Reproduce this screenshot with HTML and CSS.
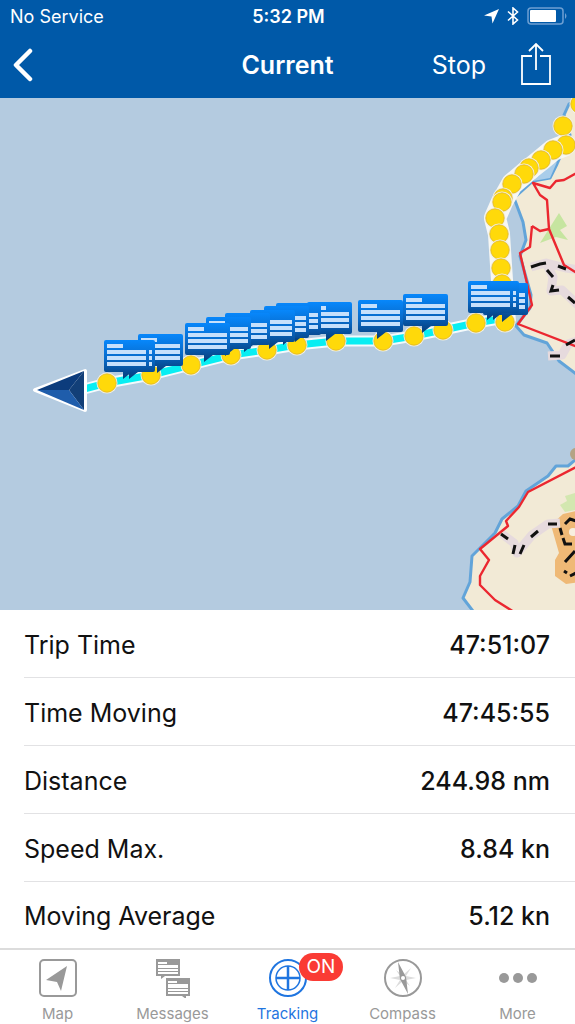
FILE: index.html
```html
<!DOCTYPE html>
<html lang="en">
<head>
    <meta charset="UTF-8">
    <meta name="viewport" content="width=device-width, initial-scale=1.0">
    <title>Tracking</title>
    <link rel="stylesheet" href="styles.css">
</head>
<body>
    <header class="header">
        <div class="status-bar">
            <span>No Service</span>
            <span class="clock">5:32 PM</span>
            <div class="status-icons">
                <svg width="15" height="15" viewBox="0 0 15 15"><path d="M15 0 8.500 14.500 7.500 7.500 0 6.500z" fill="#fff"/></svg>
                <svg width="12" height="18" viewBox="0 0 12 18"><path d="M1 4.500 10.500 13 6 17V1l4.500 4L1 13.500" fill="none" stroke="#fff" stroke-width="1.600"/></svg>
                <svg width="40" height="18" viewBox="0 0 40 18">
                    <rect x="1" y="1" width="35" height="16" rx="3" fill="none" stroke="#6d9fd2" stroke-width="1.500"/>
                    <rect x="3" y="3" width="26" height="12" rx="1" fill="#fff"/>
                    <path d="M38 6q3 3 0 6z" fill="#6d9fd2"/>
                </svg>
            </div>
        </div>
        <nav class="nav-bar">
            <button type="button" class="back" aria-label="Back">
                <svg width="20" height="34" viewBox="0 0 20 34"><path d="M17 3 3 17l14 14" fill="none" stroke="#fff" stroke-width="4.500" stroke-linecap="round" stroke-linejoin="round"/></svg>
            </button>
            <h1>Current</h1>
            <div class="nav-actions">
                <button type="button" class="stop">Stop</button>
                <button type="button" aria-label="Share">
                    <svg width="32" height="44" viewBox="0 0 32 44" fill="none" stroke="#fff" stroke-width="1.800"><path d="M12 13H2v28h28V13H20M16 27V1M9 8l7-7 7 7"/></svg>
                </button>
            </div>
        </nav>
    </header>

    <svg class="map" viewBox="0 98 575 512" preserveAspectRatio="xMidYMid slice" role="img" aria-label="Track map">
        <defs>
            <linearGradient id="bubble" x1="0" y1="0" x2="0" y2="1">
                <stop offset="0" stop-color="#0787fb"/>
                <stop offset="0.500" stop-color="#0869c7"/>
                <stop offset="1" stop-color="#063c78"/>
            </linearGradient>
            <g id="msg">
                <path d="M2 0H43Q45 0 45 2V30Q45 32 43 32H28L19 39V32H2Q0 32 0 30V2Q0 0 2 0z" fill="url(#bubble)"/>
                <path d="M3 4h16v4H3zM3 10h39v4H3zM3 16h39v4H3zM3 22h39v4H3z" fill="#c6e0fc"/>
            </g>
            <g id="dot">
                <circle r="10.500" fill="#f2f0e2"/>
                <circle r="9.200" fill="#ffd90a" stroke="#e0b52a" stroke-width="0.800"/>
            </g>
        </defs>

        <rect y="98" width="575" height="512" fill="#b4cbe0"/>

        <!-- land -->
        <g fill="#f2ead6" stroke="#62a4d9" stroke-width="3" stroke-linejoin="round">
            <path d="M580 98 569 104 564 115 570 135 557 164 550 178 533 181 514 198 523 222 526 240 520 256 531 295 530 308 516 326 524 335 547 343 559 361 580 377z"/>
            <path d="M580 456 568 466 556 466 548 476 526 491 518 506 502 519 495 533 472 556 470 582 463 598 476 615H580z"/>
        </g>
        <path d="M533 181 550 178 557 162 542 172z" fill="#a9cdea"/>
        <g fill="#c6e5a0">
            <path d="M540 243 559 213 567 226 560 230 568 240 556 237z"/>
            <path d="M560 505l7-4-2-5 10-3v17l-10 2z" opacity="0.700"/>
        </g>
        <path d="M580 510 563 514 551 525 559 553 555 560 555 576 566 584 580 582z" fill="#efb976"/>
        <circle cx="573" cy="532" r="4" fill="#f8efe0"/>
        <circle cx="576" cy="454" r="6" fill="#b5a384"/>

        <!-- roads -->
        <g fill="none" stroke="#e6dadd" stroke-width="9" stroke-linejoin="round">
            <path d="M531 267 546 263 553 277 551 291 562 290 580 307M546 263 566 268 580 270M548 356 562 355 568 344 580 340"/>
            <path d="M502 534 514 543 517 553 532 535 548 524 560 523"/>
        </g>
        <g fill="none" stroke="#eb2730" stroke-width="2.400" stroke-linejoin="round">
            <path d="M580 171 564 180 556 181 550 188 533 183 540 195 547 200 549 229 564 265 580 275"/>
            <path d="M532 226 530 247 520 253 532 305 518 324 580 348M532 226 540 231 549 229"/>
            <path d="M580 465 528 492 519 507 506 521 508 526 480 549 489 560 480 576V585L495 600 514 612"/>
        </g>
        <g fill="none" stroke="#111" stroke-width="3">
            <path d="M531 267 540 264 546 263M547 270 553 277M558 266 566 269M553 285 551 291 559 290M568 297 575 303M550 356H560M566 345 575 340"/>
            <path d="M501 534 508 539M515 545 513 554M524 545 520 554M531 537 538 531M548 524H557M560 528 562 535M563 538 565 544H572M575 551 565 562M564 571 567 573M570 576 576 573M565 524 570 519 576 521"/>
        </g>

        <!-- track -->
        <path d="M566 145 553 150 541 160 531 168 512 184 502 202 495 218 499 234 500 250 502 280 505 322" fill="none" stroke="#f7f7f4" stroke-width="22" stroke-linejoin="round"/>
        <g fill="none" stroke-linejoin="round">
            <path d="M84 389 107 383 151 375 191 365 231 355 267 350 297 345 336 341 383 341 414 336 443 330 476 323 505 318" stroke="#f4fafc" stroke-width="11"/>
            <path d="M84 389 107 383 151 375 191 365 231 355 267 350 297 345 336 341 383 341 414 336 443 330 476 323 505 318" stroke="#08eef2" stroke-width="7"/>
        </g>
        <use href="#dot" x="580" y="104"/>
        <use href="#dot" x="563" y="126"/>
        <use href="#dot" x="566" y="145"/>
        <use href="#dot" x="553" y="150"/>
        <use href="#dot" x="541" y="160"/>
        <use href="#dot" x="529" y="168"/>
        <use href="#dot" x="524" y="174"/>
        <use href="#dot" x="512" y="184"/>
        <use href="#dot" x="503" y="198"/>
        <use href="#dot" x="502" y="202"/>
        <use href="#dot" x="495" y="218"/>
        <use href="#dot" x="499" y="234"/>
        <use href="#dot" x="500" y="250"/>
        <use href="#dot" x="501" y="268"/>
        <use href="#dot" x="502" y="284"/>
        <use href="#dot" x="107" y="383"/>
        <use href="#dot" x="151" y="375"/>
        <use href="#dot" x="191" y="365"/>
        <use href="#dot" x="231" y="355"/>
        <use href="#dot" x="267" y="350"/>
        <use href="#dot" x="297" y="345"/>
        <use href="#dot" x="336" y="341"/>
        <use href="#dot" x="383" y="341"/>
        <use href="#dot" x="414" y="336"/>
        <use href="#dot" x="443" y="330"/>
        <use href="#dot" x="476" y="323"/>
        <use href="#dot" x="505" y="322"/>

        <!-- messages, the left one of a stack lies on top -->
        <use href="#msg" x="138" y="334"/>
        <use href="#msg" x="110" y="340"/>
        <use href="#msg" x="104" y="340"/>
        <use href="#msg" x="307" y="302"/>
        <use href="#msg" x="276" y="303"/>
        <use href="#msg" x="264" y="306"/>
        <use href="#msg" x="250" y="310"/>
        <use href="#msg" x="225" y="313"/>
        <use href="#msg" x="206" y="317"/>
        <use href="#msg" x="185" y="323"/>
        <use href="#msg" x="358" y="300"/>
        <use href="#msg" x="403" y="294"/>
        <use href="#msg" x="483" y="283"/>
        <use href="#msg" x="474" y="281"/>
        <use href="#msg" x="468" y="281"/>

        <!-- heading arrow -->
        <path d="M35 390 85 371V410z" fill="#fff" stroke="#fff" stroke-width="4" stroke-linejoin="round"/>
        <path d="M37 390 84 371 69 390z" fill="#0c3c7c"/>
        <path d="M84 371V410L69 390z" fill="#123f78"/>
        <path d="M37 390H69L84 410z" fill="#1f5dab"/>
    </svg>

    <div class="stats">
        <table>
            <tr><th scope="row">Trip Time</th><td>47:51:07</td></tr>
            <tr><th scope="row">Time Moving</th><td>47:45:55</td></tr>
            <tr><th scope="row">Distance</th><td>244.98 nm</td></tr>
            <tr><th scope="row">Speed Max.</th><td>8.84 kn</td></tr>
            <tr><th scope="row">Moving Average</th><td>5.12 kn</td></tr>
        </table>
    </div>

    <nav class="tab-bar">
        <a href="#map" class="tab">
            <svg width="40" height="40" viewBox="0 0 40 40"><rect x="2" y="2" width="36" height="36" rx="4" fill="none" stroke="currentColor" stroke-width="2"/><path d="M29 8 23 33 19 24 8 22z" fill="currentColor"/></svg>
            <span>Map</span>
        </a>
        <a href="#messages" class="tab">
            <svg width="40" height="40" viewBox="0 0 40 40">
                <path d="M3 1h24v17H12l-4 3v-3H3zM13 20h24v18h-4v3l-4-3H13z" fill="currentColor"/>
                <path d="M5 4h9v2H5zM5 7h20v3H5zM5 11h20v2H5zM5 14h20v2H5zM15 23h9v2h-9zM15 26h20v4H15zM15 31h20v2H15zM15 34h20v2H15z" fill="#fff"/>
            </svg>
            <span>Messages</span>
        </a>
        <a href="#tracking" class="tab active">
            <svg width="40" height="40" viewBox="0 0 40 40" fill="none" stroke="currentColor"><circle cx="20" cy="20" r="18" stroke-width="2"/><circle cx="20" cy="20" r="12" stroke-width="1.500"/><path d="M20 8v24M8 20h24" stroke-width="2.500"/></svg>
            <span>Tracking</span>
            <span class="badge">ON</span>
        </a>
        <a href="#compass" class="tab">
            <svg width="40" height="40" viewBox="0 0 40 40">
                <circle cx="20" cy="20" r="18" fill="none" stroke="currentColor" stroke-width="2"/>
                <path d="M7 20 17 18 13 12 20 17 28 10 23 18 33 20 23 22 27 28 20 23 12 30 17 22z" fill="#dcdcdc"/>
                <path d="M15 4 23 19 20 20 17 21zM25 36 23 19 17 21z" fill="currentColor"/>
                <circle cx="20" cy="20" r="2" fill="#fff"/>
            </svg>
            <span>Compass</span>
        </a>
        <a href="#more" class="tab">
            <svg width="40" height="40" viewBox="0 0 40 40" fill="currentColor"><circle cx="6" cy="20" r="5"/><circle cx="20" cy="20" r="5"/><circle cx="34" cy="20" r="5"/></svg>
            <span>More</span>
        </a>
    </nav>
</body>
</html>
```
FILE: styles.css
```css
* {
    box-sizing: border-box;
}
body {
    font-family: Inter, "Liberation Sans", sans-serif;
    background-color: #fff;
    color: #111;
    display: flex;
    flex-direction: column;
    min-height: 100vh;
    margin: 0;
}
button {
    background: none;
    border: 0;
    padding: 0;
    color: inherit;
    font: inherit;
    cursor: pointer;
}
svg {
    display: block;
}
.header {
    background-color: #0059a8;
    color: #fff;
}
.status-bar,
.nav-bar {
    display: grid;
    grid-template-columns: 1fr auto 1fr;
    align-items: center;
    padding: 0 10px;
}
.status-bar {
    height: 32px;
    padding-right: 8px;
    font-size: 18px;
}
.clock {
    font-weight: 600;
}
.status-icons {
    display: flex;
    align-items: center;
    justify-content: flex-end;
    gap: 8px;
}
.nav-bar {
    height: 66px;
    font-size: 25px;
}
.back {
    justify-self: start;
    padding: 0 3px;
}
.nav-bar h1 {
    margin: 0;
    font-size: 25px;
    font-weight: 600;
}
.nav-actions {
    display: flex;
    align-items: center;
    justify-content: flex-end;
    gap: 34px;
    padding-right: 13px;
}
.map {
    flex: 1 1 0;
    width: 100%;
    min-height: 300px;
}
.stats {
    padding-left: 24px;
}
.stats table {
    width: 100%;
    border-collapse: separate;
    border-spacing: 0;
    font-size: 25px;
}
.stats th,
.stats td {
    height: 68px;
    padding: 2px 0 0;
    border-bottom: 1px solid #e2e2e4;
}
.stats th {
    font-weight: 400;
    text-align: left;
}
.stats td {
    padding-right: 25px;
    font-weight: 500;
    text-align: right;
}
.stats tr:last-child th,
.stats tr:last-child td {
    height: 66px;
    border-bottom: 0;
}
.tab-bar {
    display: flex;
    height: 76px;
    border-top: 2px solid #dcdcdc;
}
.tab {
    flex: 1;
    position: relative;
    display: flex;
    flex-direction: column;
    align-items: center;
    gap: 6px;
    padding-top: 8px;
    color: #999;
    font-size: 15px;
    line-height: 20px;
    text-decoration: none;
}
.tab.active {
    color: #1f75e0;
}
/* overlaps the top right of the icon */
.badge {
    position: absolute;
    top: 3px;
    left: calc(50% + 11px);
    padding: 0 8px;
    border-radius: 14px;
    background-color: #fa3b34;
    color: #fff;
    font-size: 19px;
    line-height: 28px;
}
```
